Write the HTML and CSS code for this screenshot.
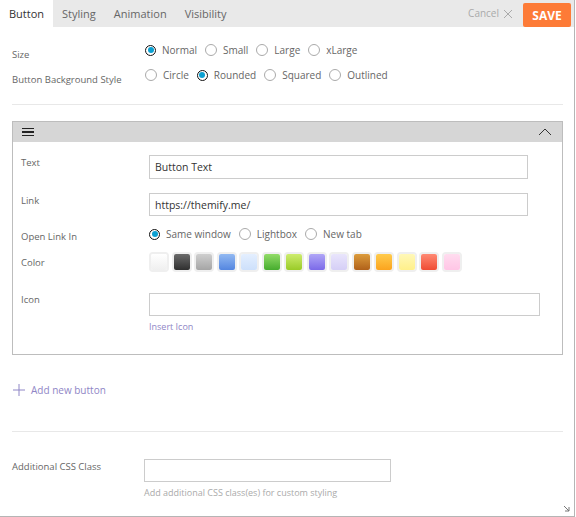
FILE: index.html
```html
<!DOCTYPE html>
<html lang="en">
<head>
    <meta charset="UTF-8">
    <meta name="viewport" content="width=device-width, initial-scale=1.0">
    <link rel="stylesheet" href="styles.css">
    <title>Button Module</title>
</head>
<body>
<div class="panel">
    <div class="tabs">
        <ul class="tab-list">
            <li class="tab active">Button</li>
            <li class="tab">Styling</li>
            <li class="tab">Animation</li>
            <li class="tab">Visibility</li>
        </ul>
        <div class="actions">
            <span class="cancel">Cancel
                <svg width="10" height="10" viewBox="0 0 10 10"><path d="M1 1L9 9M9 1L1 9" stroke="#aaa" stroke-width="1" fill="none"/></svg>
            </span>
            <button class="save">SAVE</button>
        </div>
    </div>

    <div class="content">
        <div class="field">
            <div class="lbl">Size</div>
            <div class="radios">
                <span class="opt"><i class="radio on"></i>Normal</span>
                <span class="opt"><i class="radio"></i>Small</span>
                <span class="opt"><i class="radio"></i>Large</span>
                <span class="opt"><i class="radio"></i>xLarge</span>
            </div>
        </div>
        <div class="field second">
            <div class="lbl">Button Background Style</div>
            <div class="radios">
                <span class="opt"><i class="radio"></i>Circle</span>
                <span class="opt"><i class="radio on"></i>Rounded</span>
                <span class="opt"><i class="radio"></i>Squared</span>
                <span class="opt"><i class="radio"></i>Outlined</span>
            </div>
        </div>

        <div class="sep first"></div>

        <div class="module">
            <div class="module-head">
                <span class="burger"><b></b><b></b><b></b></span>
                <svg class="caret" width="14" height="8" viewBox="0 0 14 8"><path d="M1 7L7 1L13 7" stroke="#333" stroke-width="1" fill="none"/></svg>
            </div>
            <div class="module-body">
                <div class="row r-text">
                    <div class="mlbl">Text</div>
                    <input class="inp" type="text" value="Button Text">
                </div>
                <div class="row r-link">
                    <div class="mlbl">Link</div>
                    <input class="inp" type="text" value="https://themify.me/">
                </div>
                <div class="row r-open">
                    <div class="mlbl">Open Link In</div>
                    <div class="radios">
                        <span class="opt"><i class="radio on"></i>Same window</span>
                        <span class="opt"><i class="radio"></i>Lightbox</span>
                        <span class="opt"><i class="radio"></i>New tab</span>
                    </div>
                </div>
                <div class="row r-color">
                    <div class="mlbl">Color</div>
                    <div class="swatches">
                        <span class="sw"><i class="c-white"></i></span>
                        <span class="sw"><i class="c-black"></i></span>
                        <span class="sw"><i class="c-gray"></i></span>
                        <span class="sw"><i class="c-blue"></i></span>
                        <span class="sw"><i class="c-lblue"></i></span>
                        <span class="sw"><i class="c-green"></i></span>
                        <span class="sw"><i class="c-lime"></i></span>
                        <span class="sw"><i class="c-purple"></i></span>
                        <span class="sw"><i class="c-lpurple"></i></span>
                        <span class="sw"><i class="c-brown"></i></span>
                        <span class="sw"><i class="c-orange"></i></span>
                        <span class="sw"><i class="c-yellow"></i></span>
                        <span class="sw"><i class="c-red"></i></span>
                        <span class="sw"><i class="c-pink"></i></span>
                    </div>
                </div>
                <div class="row r-icon">
                    <div class="mlbl">Icon</div>
                    <div>
                        <input class="inp wide" type="text">
                        <a class="link insert">Insert Icon</a>
                    </div>
                </div>
            </div>
        </div>

        <a class="link add">
            <svg width="12" height="12" viewBox="0 0 12 12"><path d="M6 0V12M0 6H12" stroke="#8f86c6" stroke-width="1" fill="none"/></svg>
            Add new button
        </a>

        <div class="sep last"></div>

        <div class="field css-row">
            <div class="lbl css-lbl">Additional CSS Class</div>
            <div>
                <input class="inp css-inp" type="text">
                <div class="hint">Add additional CSS class(es) for custom styling</div>
            </div>
        </div>
    </div>
    <span class="resize">
        <svg width="7" height="7" viewBox="0 0 7 7"><path d="M1 1L6 6M6 2V6H2" stroke="#777" stroke-width="1" fill="none"/></svg>
    </span>
</div>
</body>
</html>
```

FILE: styles.css
```css
body{margin:0;font-family:"Open Sans","Liberation Sans",sans-serif;color:#666;background:#fff;}
.panel{width:574px;height:516px;border-right:1px solid #b5b5b5;border-bottom:1px solid #b5b5b5;position:relative;overflow:hidden;}

/* tabs */
.tabs{height:27px;background:#e9e9e9;display:flex;justify-content:space-between;}
.tab-list{list-style:none;margin:0;padding:0;display:flex;}
.tab{font-size:11px;line-height:27px;padding:0 9px;color:#666;}
.tab.active{background:#fff;color:#333;}
.actions{display:flex;align-items:flex-start;padding-right:3px;}
.cancel{font-size:10px;color:#aaa;line-height:27px;display:flex;align-items:center;gap:4px;margin-right:10px;}
.save{margin-top:3px;width:48px;height:24px;border:0;border-radius:2px;background:#fd7b37;color:#fff;font-family:"Open Sans","Liberation Sans",sans-serif;font-weight:700;font-size:12px;padding:0;}

/* content */
.content{padding:16px 11px 0 12px;}
.field{display:flex;align-items:flex-start;}
.field.second{margin-top:6px;}
.lbl{width:133px;flex:none;font-size:9.5px;line-height:14px;padding-top:5px;color:#666;}
.radios{display:flex;gap:8px;font-size:10px;line-height:14px;color:#666;}
.opt{display:flex;align-items:center;gap:6px;}
.radio{width:10px;height:10px;border:1px solid #aaa;border-radius:50%;display:inline-block;position:relative;}
.radio.on{border:1.5px solid #111;width:9px;height:9px;}
.radio.on::after{content:"";position:absolute;left:1.5px;top:1.5px;width:6px;height:6px;border-radius:50%;background:#0ba0d2;}
.sep{height:1px;background:#e8e8e8;}
.sep.first{margin-top:17px;}
.sep.last{margin-top:34px;}

/* module */
.module{margin-top:16px;border:1px solid #bdbdbd;}
.module-head{height:20px;background:#d6d6d6;display:flex;align-items:center;justify-content:space-between;padding:0 10px 0 9px;}
.burger{display:flex;flex-direction:column;gap:2px;width:12px;}
.burger b{display:block;height:1.5px;background:#222;}
.module-body{padding:13px 0 20px 8px;}
.row{display:flex;align-items:flex-start;}
.mlbl{width:128px;flex:none;font-size:9.5px;line-height:14px;color:#666;}
.inp{box-sizing:border-box;width:379px;height:23px;border:1px solid #ccc;padding:0 5px;font-family:"Open Sans","Liberation Sans",sans-serif;font-size:10.5px;color:#333;display:block;}
.r-text .inp{height:24px;}
.r-text .mlbl{padding-top:1px;}
.r-link{margin-top:14px;}
.r-link .mlbl{padding-top:1px;}
.r-open{margin-top:11px;}
.r-open .mlbl{padding-top:3px;}
.r-color{margin-top:8px;}
.r-color .mlbl{padding-top:4px;}
.r-icon{margin-top:21px;}
.r-icon .mlbl{padding-top:0;}
.inp.wide{width:391px;}
.link{color:#8f86c6;font-size:9px;line-height:14px;text-decoration:none;}
.insert{display:block;margin-top:4px;}

.swatches{display:flex;gap:2.5px;}
.sw{width:20px;height:20px;box-sizing:border-box;border:2px solid #efefef;border-radius:4px;display:flex;}
.sw i{flex:1;border-radius:2px;}
.c-white{background:linear-gradient(#fff,#efefef);}
.c-black{background:linear-gradient(#6b6b6b,#2f2f2f);}
.c-gray{background:linear-gradient(#cfcfcf,#a5a5a5);}
.c-blue{background:linear-gradient(#92b9f2,#5486e0);}
.c-lblue{background:linear-gradient(#e4efff,#cde0fb);}
.c-green{background:linear-gradient(#92dc68,#46ac2e);}
.c-lime{background:linear-gradient(#cdec6e,#9acb28);}
.c-purple{background:linear-gradient(#b0a6f7,#7b6ae8);}
.c-lpurple{background:linear-gradient(#e9e5fc,#d5cff6);}
.c-brown{background:linear-gradient(#dc9c3c,#b0611a);}
.c-orange{background:linear-gradient(#ffcb4c,#fba41e);}
.c-yellow{background:linear-gradient(#fff8b8,#fff08a);}
.c-red{background:linear-gradient(#ff8a74,#ef4c34);}
.c-pink{background:linear-gradient(#ffdcef,#ffc5e5);}

.add{display:flex;align-items:center;gap:6px;margin-top:28px;font-size:10px;padding-left:1px;}

.css-row{margin-top:27px;}
.css-lbl{width:132px;padding-top:1px;}
.css-inp{width:247px;}
.hint{font-size:9px;color:#aaa;margin-top:4px;line-height:14px;}

.resize{position:absolute;right:4px;bottom:4px;line-height:0;}
```
